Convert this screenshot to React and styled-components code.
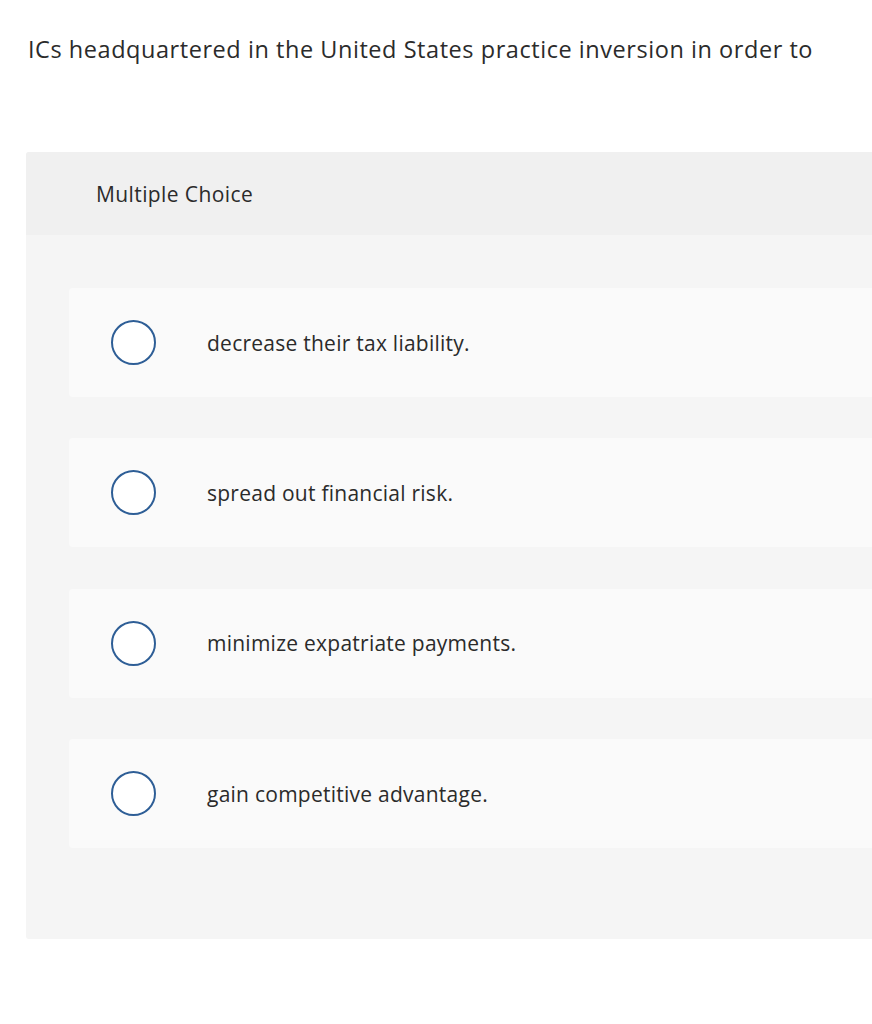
import React from "react";
import styled, { createGlobalStyle } from "styled-components";

const GlobalStyle = createGlobalStyle`
  html, body {
    margin: 0;
    padding: 0;
    background: #ffffff;
    overflow: hidden;
  }
  body {
    font-family: "Open Sans", "Liberation Sans", sans-serif;
    color: #2b2b2b;
  }
`;

const Page = styled.div`
  width: 872px;
  height: 1024px;
  overflow: hidden;
  padding-top: 30px;
  box-sizing: border-box;
`;

const Question = styled.p`
  margin: 0 0 0 28px;
  font-size: 23.5px;
  letter-spacing: 0.55px;
  line-height: 38px;
  color: #2b2b2b;
  white-space: nowrap;
`;

const Panel = styled.section`
  margin: 84px 0 0 26px;
  width: 900px;
  background: #f5f5f5;
  border-radius: 3px;
  overflow: hidden;
`;

const PanelHeader = styled.div`
  height: 83px;
  background: #f0f0f0;
  display: flex;
  align-items: center;
  padding-left: 70px;
  font-size: 21px;
  letter-spacing: 0.4px;
  color: #2b2b2b;
`;

const OptionList = styled.div`
  display: flex;
  flex-direction: column;
  gap: 41.4px;
  padding: 53px 0 91px 43px;
`;

const Option = styled.label`
  height: 109px;
  background: #fafafa;
  border-radius: 4px;
  display: flex;
  align-items: center;
  padding-left: 42px;
  cursor: pointer;
`;

const Radio = styled.span`
  width: 41px;
  height: 41px;
  border: 2px solid #2e5e96;
  border-radius: 50%;
  background: #ffffff;
  flex-shrink: 0;
`;

const OptionText = styled.span`
  margin-left: 51px;
  font-size: 21px;
  letter-spacing: 0.25px;
  color: #2b2b2b;
`;

const choices = [
  "decrease their tax liability.",
  "spread out financial risk.",
  "minimize expatriate payments.",
  "gain competitive advantage.",
];

export default function App() {
  return (
    <>
      <GlobalStyle />
      <Page>
        <Question>ICs headquartered in the United States practice inversion in order to</Question>
        <Panel>
          <PanelHeader>Multiple Choice</PanelHeader>
          <OptionList>
            {choices.map((c) => (
              <Option key={c}>
                <Radio />
                <OptionText>{c}</OptionText>
              </Option>
            ))}
          </OptionList>
        </Panel>
      </Page>
    </>
  );
}
